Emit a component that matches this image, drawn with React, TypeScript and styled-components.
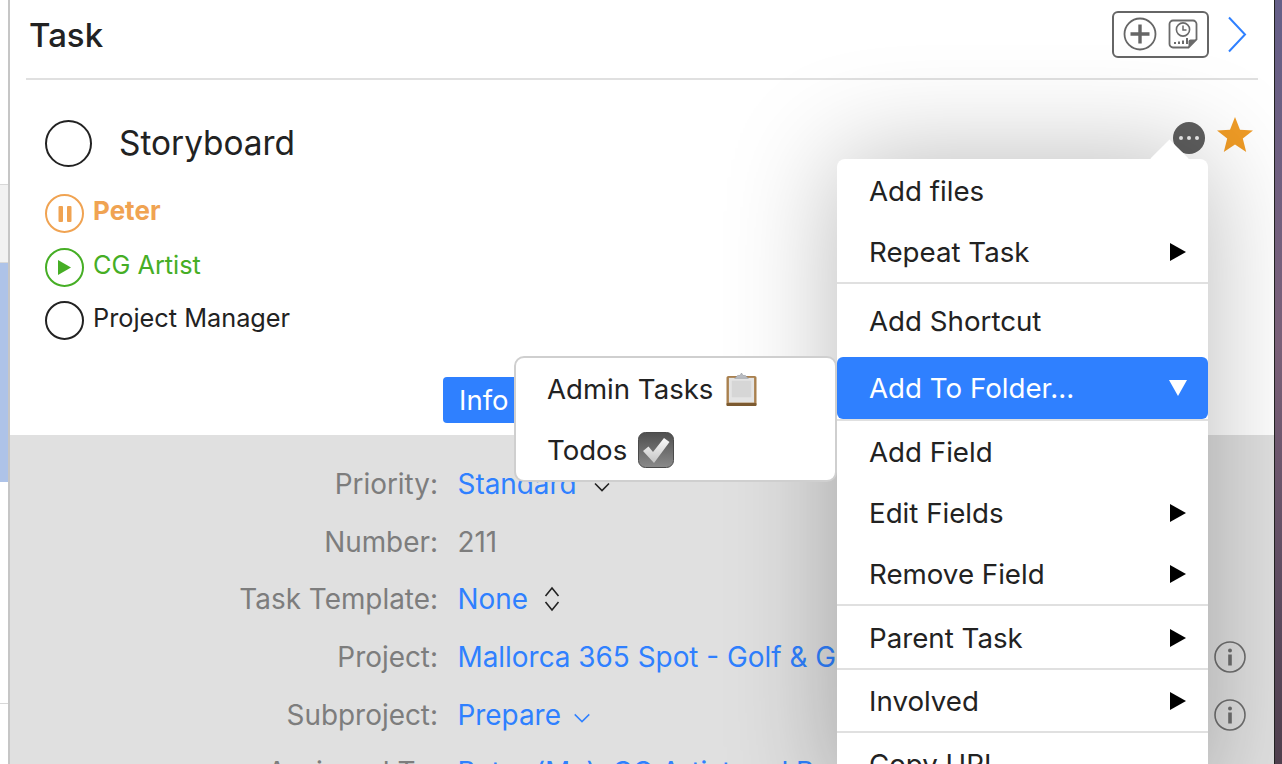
import styled, { createGlobalStyle } from "styled-components";

const blue = "#2f80ff";

const GlobalStyle = createGlobalStyle`
  html, body {
    margin: 0;
    padding: 0;
    background: #fff;
  }
  body {
    font-family: Inter, "Noto Sans", sans-serif;
  }
`;

const Caret = () => (
  <MenuCaret viewBox="0 0 16 18">
    <polygon points="0,0 16,9 0,18" fill="#000" />
  </MenuCaret>
);

const InfoIcon = () => (
  <InfoSvg viewBox="0 0 32 32">
    <circle cx="16" cy="16" r="15" fill="none" stroke="#6f6f6f" strokeWidth="1.6" />
    <circle cx="16" cy="9.5" r="2" fill="#6f6f6f" />
    <rect x="14.2" y="13.5" width="3.6" height="11" fill="#6f6f6f" />
  </InfoSvg>
);

const NoteIcon = () => (
  <svg width="30" height="30" viewBox="0 0 30 30">
    <path
      d="M5 1.5h20a3.5 3.5 0 0 1 3.5 3.5v15.5l-8 8H5A3.5 3.5 0 0 1 1.5 25V5A3.5 3.5 0 0 1 5 1.5Z"
      fill="#fff"
      stroke="#6a6a6a"
      strokeWidth="1.8"
    />
    <path d="M28.5 20.5h-6a2 2 0 0 0-2 2v6Z" fill="#6a6a6a" />
    <circle cx="15" cy="10.5" r="6.6" fill="none" stroke="#6a6a6a" strokeWidth="1.6" />
    <path d="M15 6.5v4.5h3.5" fill="none" stroke="#6a6a6a" strokeWidth="1.5" />
    <rect x="6" y="23" width="2" height="2" fill="#6a6a6a" />
    <rect x="10" y="22.5" width="2" height="2.5" fill="#6a6a6a" />
    <rect x="14" y="21.5" width="2" height="3.5" fill="#6a6a6a" />
    <rect x="18" y="19" width="2" height="6" fill="#6a6a6a" />
  </svg>
);

const ClipboardIcon = () => (
  <svg width="31" height="34" viewBox="0 0 32 35">
    <rect x="0.5" y="4" width="31" height="31" rx="2" fill="#a9804e" />
    <rect x="3" y="6" width="26" height="25.5" fill="#e4e4e4" />
    <rect x="6" y="9" width="20" height="17" fill="#d6d6d6" />
    <rect x="0.5" y="32" width="31" height="3" rx="1" fill="#7c5a30" />
    <path d="M9 6.5 L12 3.5 H14.5 L16 1 L17.5 3.5 H20 L23 6.5 Z" fill="#b9bcc2" stroke="#90939a" strokeWidth="0.6" />
  </svg>
);

const CheckIcon = () => (
  <CheckSvg viewBox="0 0 36 36">
    <defs>
      <linearGradient id="checkBg" x1="0" y1="0" x2="0" y2="1">
        <stop offset="0" stopColor="#4f4f4f" />
        <stop offset="1" stopColor="#8a8a8a" />
      </linearGradient>
      <linearGradient id="checkMark" x1="0" y1="0" x2="0" y2="1">
        <stop offset="0" stopColor="#fafafa" />
        <stop offset="1" stopColor="#c4c4c4" />
      </linearGradient>
    </defs>
    <rect x="0.5" y="0.5" width="35" height="35" rx="7" fill="url(#checkBg)" stroke="#4a4a4a" />
    <path d="M5 19 L10.5 14.5 L15 20 L26 6 L31.5 10 L16 31 Z" fill="url(#checkMark)" />
  </CheckSvg>
);

const App = () => {
  return (
    <Screen>
      <GlobalStyle />
      <LeftStrip>
        <StripBlock $height={184} $color="#ffffff" />
        <StripBlock $height={78} $color="#f2f2f2" $line />
        <StripBlock $height={220} $color="#aec3e8" $line />
        <StripBlock $height={221} $color="#ffffff" />
        <StripBlock $height={61} $color="#ffffff" $line />
      </LeftStrip>
      <Panel>
        <Header>
          <Title>Task</Title>
          <HeaderTools>
            <ToolGroup>
              <svg width="34" height="34" viewBox="0 0 34 34">
                <circle cx="17" cy="17" r="15.5" fill="none" stroke="#666" strokeWidth="1.8" />
                <path d="M17 7.5v19M7.5 17h19" stroke="#666" strokeWidth="3.4" />
              </svg>
              <NoteIcon />
            </ToolGroup>
            <svg width="20" height="37" viewBox="0 0 20 37">
              <path d="M2 1.5 L18 18.5 L2 35.5" fill="none" stroke={blue} strokeWidth="2" />
            </svg>
          </HeaderTools>
        </Header>

        <TitleRow>
          <TitleRing />
          <TaskName>Storyboard</TaskName>
          <TitleActions>
            <MoreButton>
              <span />
              <span />
              <span />
            </MoreButton>
            <svg width="36" height="35" viewBox="0 0 36 35">
              <polygon
                points="18,0 23,12.8 36,13.4 25.8,21.6 29.2,35 18,27.6 6.8,35 10.2,21.6 0,13.4 13,12.8"
                fill="#f09c26"
              />
            </svg>
          </TitleActions>
        </TitleRow>

        <Assignees>
          <Assignee>
            <StatusRing $color="#f0a352">
              <svg width="16" height="18" viewBox="0 0 16 18">
                <rect x="1.5" y="1" width="4.5" height="16" rx="1" fill="#f0a352" />
                <rect x="10" y="1" width="4.5" height="16" rx="1" fill="#f0a352" />
              </svg>
            </StatusRing>
            <AssigneeName $color="#f0a352" $bold>
              Peter
            </AssigneeName>
          </Assignee>
          <Assignee>
            <StatusRing $color="#46ae25">
              <svg width="15" height="17" viewBox="0 0 15 17">
                <polygon points="1,1 14,8.5 1,16" fill="#46ae25" />
              </svg>
            </StatusRing>
            <AssigneeName $color="#46ae25">CG Artist</AssigneeName>
          </Assignee>
          <Assignee>
            <StatusRing $color="#222" />
            <AssigneeName $color="#222">Project Manager</AssigneeName>
          </Assignee>
        </Assignees>

        <Tabs>
          <ActiveTab>Info</ActiveTab>
        </Tabs>

        <Details>
          <DetailRow>
            <Label>Priority:</Label>
            <Value>
              Standard
              <Chevron viewBox="0 0 16 10" $color="#222">
                <path d="M1 1.5 L8 8.5 L15 1.5" fill="none" stroke="currentColor" strokeWidth="1.6" />
              </Chevron>
            </Value>
          </DetailRow>
          <DetailRow>
            <Label>Number:</Label>
            <Value $plain>211</Value>
          </DetailRow>
          <DetailRow>
            <Label>Task Template:</Label>
            <Value>
              None
              <UpDown viewBox="0 0 16 26">
                <path d="M1.5 10 L8 2 L14.5 10 M1.5 16 L8 24 L14.5 16" fill="none" stroke="#222" strokeWidth="1.6" />
              </UpDown>
            </Value>
          </DetailRow>
          <DetailRow>
            <Label>Project:</Label>
            <Value>Mallorca 365 Spot - Golf &amp; Gourmet</Value>
            <InfoIcon />
          </DetailRow>
          <DetailRow>
            <Label>Subproject:</Label>
            <Value>
              Prepare
              <Chevron viewBox="0 0 18 11" $color={blue} $wide>
                <path d="M1 1.5 L9 9.5 L17 1.5" fill="none" stroke="currentColor" strokeWidth="1.6" />
              </Chevron>
            </Value>
            <InfoIcon />
          </DetailRow>
          <DetailRow>
            <Label>Assigned To:</Label>
            <Value>Peter (Me), CG Artist and Project Manager</Value>
          </DetailRow>
        </Details>

        <Menu>
          <MenuTip />
          <MenuGroup>
            <MenuItem>Add files</MenuItem>
            <MenuItem>
              Repeat Task
              <Caret />
            </MenuItem>
          </MenuGroup>
          <MenuGroup $pad={6}>
            <MenuItem>Add Shortcut</MenuItem>
            <ActiveItem>
              Add To Folder...
              <svg width="18" height="16" viewBox="0 0 18 16">
                <polygon points="0,0 18,0 9,16" fill="#fff" />
              </svg>
            </ActiveItem>
          </MenuGroup>
          <MenuGroup $pad={0}>
            <MenuItem>Add Field</MenuItem>
            <MenuItem>
              Edit Fields
              <Caret />
            </MenuItem>
            <MenuItem>
              Remove Field
              <Caret />
            </MenuItem>
          </MenuGroup>
          <MenuGroup>
            <MenuItem>
              Parent Task
              <Caret />
            </MenuItem>
          </MenuGroup>
          <MenuGroup $pad={0}>
            <MenuItem>
              Involved
              <Caret />
            </MenuItem>
          </MenuGroup>
          <MenuItem>Copy URL</MenuItem>
        </Menu>

        <SubMenu>
          <SubItem>
            Admin Tasks
            <ClipboardIcon />
          </SubItem>
          <SubItem>
            Todos
            <CheckIcon />
          </SubItem>
        </SubMenu>
      </Panel>
      <Wallpaper />
    </Screen>
  );
};

export default App;

const Screen = styled.div`
  display: flex;
  width: 1282px;
  height: 764px;
  overflow: hidden;
`;

const LeftStrip = styled.div`
  display: flex;
  flex-direction: column;
  width: 8px;
  flex-shrink: 0;
  border-right: 2px solid #c6c6c6;
`;

const StripBlock = styled.div<{ $height: number; $color: string; $line?: boolean }>`
  height: ${(p) => p.$height}px;
  flex-shrink: 0;
  box-sizing: border-box;
  background: ${(p) => p.$color};
  border-top: ${(p) => (p.$line ? "1px solid #d8d8d8" : "0")};
`;

const Panel = styled.div`
  position: relative;
  display: flex;
  flex-direction: column;
  width: 1264px;
  flex-shrink: 0;
  overflow: hidden;
  background: #fff;
  border-right: 1px solid #222;

  & > * {
    flex-shrink: 0;
  }
`;

const Header = styled.div`
  display: flex;
  align-items: center;
  justify-content: space-between;
  box-sizing: border-box;
  height: 80px;
  margin: 0 16px;
  padding: 0 11px 8px 3px;
  border-bottom: 2px solid #e0e0e0;
`;

const Title = styled.h1`
  margin: 0;
  font-size: 33px;
  font-weight: 500;
  color: #222;
`;

const HeaderTools = styled.div`
  display: flex;
  align-items: center;
  gap: 18px;
  margin-top: -2px;
`;

const ToolGroup = styled.div`
  display: flex;
  align-items: center;
  gap: 11px;
  box-sizing: border-box;
  width: 97px;
  height: 47px;
  padding-left: 9px;
  border: 2px solid #666;
  border-radius: 6px;
`;

const TitleRow = styled.div`
  display: flex;
  align-items: center;
  box-sizing: border-box;
  height: 110px;
  padding: 16px 21px 0 35px;
`;

const TitleRing = styled.div`
  box-sizing: border-box;
  width: 47px;
  height: 47px;
  border: 2px solid #222;
  border-radius: 50%;
`;

const TaskName = styled.div`
  margin-left: 27px;
  font-size: 33.4px;
  color: #222;
`;

const TitleActions = styled.div`
  display: flex;
  align-items: center;
  gap: 12px;
  margin-left: auto;
  margin-top: -17px;
`;

const MoreButton = styled.div`
  display: flex;
  align-items: center;
  justify-content: center;
  gap: 4px;
  width: 32px;
  height: 32px;
  margin-top: 6px;
  border-radius: 50%;
  background: #5f5f5f;

  span {
    width: 4px;
    height: 4px;
    border-radius: 50%;
    background: #eee;
  }
`;

const Assignees = styled.div`
  display: flex;
  flex-direction: column;
  gap: 14.5px;
  box-sizing: border-box;
  height: 187px;
  padding: 4px 0 0 35px;
`;

const Assignee = styled.div`
  display: flex;
  align-items: center;
  gap: 9px;
  height: 39px;
`;

const StatusRing = styled.div<{ $color: string }>`
  display: flex;
  align-items: center;
  justify-content: center;
  box-sizing: border-box;
  width: 39px;
  height: 39px;
  border: 2px solid ${(p) => p.$color};
  border-radius: 50%;
`;

const AssigneeName = styled.span<{ $color: string; $bold?: boolean }>`
  margin-top: -6px;
  font-size: ${(p) => (p.$bold ? 26 : 25.3)}px;
  color: ${(p) => p.$color};
  font-weight: ${(p) => (p.$bold ? 700 : 400)};
`;

const Tabs = styled.div`
  display: flex;
  height: 58px;
  padding-left: 433px;
`;

const ActiveTab = styled.div`
  box-sizing: border-box;
  width: 90px;
  height: 46px;
  padding-left: 16px;
  line-height: 46px;
  font-size: 27.5px;
  color: #fff;
  background: ${blue};
  border-radius: 4px;
`;

const Details = styled.div`
  flex: 1;
  padding-top: 20.5px;
  background: #e0e0e0;
`;

const DetailRow = styled.div`
  display: grid;
  grid-template-columns: 428px 1fr auto;
  column-gap: 19.5px;
  align-items: center;
  height: 57.6px;
  padding-right: 28px;
  white-space: nowrap;
`;

const Label = styled.div`
  text-align: right;
  font-size: 27.9px;
  color: #7d7d7d;
`;

const Value = styled.div<{ $plain?: boolean }>`
  display: flex;
  align-items: center;
  font-size: 27.9px;
  color: ${(p) => (p.$plain ? "#7d7d7d" : blue)};
`;

const Chevron = styled.svg<{ $color: string; $wide?: boolean }>`
  width: ${(p) => (p.$wide ? 18 : 16)}px;
  height: 10px;
  margin: 6px 0 0 ${(p) => (p.$wide ? 12 : 17)}px;
  color: ${(p) => p.$color};
`;

const UpDown = styled.svg`
  width: 16px;
  height: 26px;
  margin-left: 16px;
`;

const InfoSvg = styled.svg`
  width: 32px;
  height: 32px;
`;

const Menu = styled.div`
  position: absolute;
  top: 159px;
  left: 827px;
  width: 371px;
  height: 640px;
  background: #fff;
  border-radius: 8px;
  box-shadow: 0 0 110px rgba(0, 0, 0, 0.28);
`;

const MenuTip = styled.div`
  position: absolute;
  top: -14px;
  left: 319px;
  width: 27px;
  height: 27px;
  background: #fff;
  transform: rotate(45deg);
`;

const MenuGroup = styled.div<{ $pad?: number }>`
  position: relative;
  padding-top: ${(p) => p.$pad ?? 1}px;
  border-bottom: 2px solid #e0e0e0;
`;

const MenuItem = styled.div`
  display: flex;
  align-items: center;
  justify-content: space-between;
  box-sizing: border-box;
  height: 61px;
  padding: 0 22px 0 32px;
  font-size: 27.7px;
  color: #222;
`;

const ActiveItem = styled(MenuItem)`
  height: 62px;
  margin-top: 6px;
  padding-right: 21px;
  color: #fff;
  background: ${blue};
  border-radius: 6px;
`;

const MenuCaret = styled.svg`
  width: 16px;
  height: 18px;
`;

const SubMenu = styled.div`
  position: absolute;
  top: 356px;
  left: 504px;
  box-sizing: border-box;
  width: 323px;
  height: 126px;
  padding: 0 0 0 31px;
  background: #fff;
  border: 2px solid #cfcfcf;
  border-radius: 10px;
`;

const SubItem = styled.div`
  display: flex;
  align-items: center;
  gap: 13px;
  height: 61px;
  font-size: 27.6px;
  color: #222;
`;

const CheckSvg = styled.svg`
  width: 36px;
  height: 36px;
  margin-left: -2px;
`;

const Wallpaper = styled.div`
  flex: 1;
  background: linear-gradient(180deg, #655f88 0%, #7a6078 45%, #5b4a5e 80%, #4f3f4d 100%);
`;
